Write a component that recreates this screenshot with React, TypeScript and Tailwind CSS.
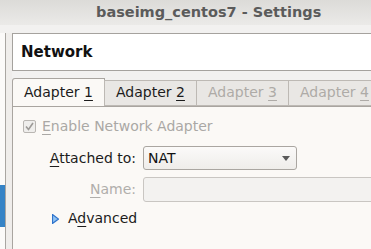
import React from "react";

// Mnemonic letter, underlined the way GTK draws access keys.
function Mn({ children }: { children: React.ReactNode }) {
  return <span className="underline decoration-1 underline-offset-[3px]">{children}</span>;
}

function Tab({ n, active, disabled }: { n: number; active?: boolean; disabled?: boolean }) {
  return (
    <div
      className={
        active
          ? "flex h-[28px] w-[93px] shrink-0 items-start justify-center rounded-tl-[3px] border border-b-0 border-[#a9a5a0] bg-[#fbf9f6] pt-[5px] text-[#1c1c1c]"
          : "mt-[2px] -ml-px flex h-[26px] w-[93px] shrink-0 items-start justify-center border border-[#bdb9b4] bg-[#e9e7e4] pt-[3px] " +
            (disabled ? "text-[#aeaba7]" : "text-[#1c1c1c]")
      }
    >
      <span>
        Adapter <Mn>{n}</Mn>
      </span>
    </div>
  );
}

export default function App() {
  return (
    <div
      className="h-[249px] w-[371px] overflow-hidden bg-[#f2f1f0] text-[14px] leading-[17px]"
      style={{ fontFamily: '"DejaVu Sans", "Noto Sans", sans-serif' }}
    >
      {/* Window title bar */}
      <div className="flex h-[25px] items-center bg-gradient-to-b from-[#dcdbd8] to-[#ebeae8] pl-[96px] text-[14.5px] font-bold text-[#5b5b5b]">
        baseimg_centos7 - Settings
      </div>

      <div className="flex pt-[8px]">
        {/* Category list (only its edge is visible) */}
        <div className="relative h-[216px] w-[6px] shrink-0 border-r border-[#a9a6a2] bg-[#fbfaf9]">
          <div className="absolute left-0 top-[152px] h-[42px] w-[5px] bg-[#3583c6]" />
        </div>
        <div className="w-[6px] shrink-0 bg-[#efedeb]" />

        <div className="flex min-w-0 flex-1 flex-col">
          {/* Page header */}
          <div className="flex h-[38px] w-[420px] items-center border border-[#a5a29e] bg-white pl-[8px] text-[15px] font-bold text-[#111]">
            Network
          </div>

          {/* Adapter tabs */}
          <div className="mt-[7px] flex">
            <Tab n={1} active />
            <Tab n={2} />
            <Tab n={3} disabled />
            <Tab n={4} disabled />
          </div>

          {/* Tab page */}
          <div className="h-[160px] w-[420px] border-l border-t border-[#a9a5a0] bg-[#fbf9f6] pl-[10px] pt-[11px]">
            <div className="flex items-center gap-[6px] text-[#aaa8a5]">
              <span className="flex h-[13px] w-[13px] items-center justify-center rounded-[2px] border border-[#b9b6b2] bg-[#efeeec]">
                <svg width="11" height="11" viewBox="0 0 11 11">
                  <polyline points="2,5.5 4.5,8.5 9,2" fill="none" stroke="#9c9a97" strokeWidth="1.6" />
                </svg>
              </span>
              <span>
                <Mn>E</Mn>nable Network Adapter
              </span>
            </div>

            <div className="mt-[11px] grid grid-cols-[114px_auto] items-center gap-x-[6px] gap-y-[7px]">
              <span className="pr-[1px] text-right text-[#1c1c1c]">
                <Mn>A</Mn>ttached to:
              </span>
              <div className="flex h-[24px] w-[154px] items-center justify-between rounded-[3px] border border-[#aaa6a1] bg-gradient-to-b from-[#fbfaf9] to-[#efedea] pl-[4px] pr-[6px] text-[#111]">
                <span>NAT</span>
                <svg width="8" height="5" viewBox="0 0 8 5">
                  <polygon points="0,0 8,0 4,5" fill="#5a5a5a" />
                </svg>
              </div>

              <span className="pr-[1px] text-right text-[#b0aeab]">
                <Mn>N</Mn>ame:
              </span>
              <div className="h-[25px] w-[260px] rounded-[3px] border border-[#c9c6c2] bg-[#f3f2f0]" />
            </div>

            <div className="mt-[8px] flex items-center gap-[9px] pl-[29px] text-[#1c1c1c]">
              <svg width="7" height="10" viewBox="0 0 7 10">
                <polygon points="0.5,0.5 6.5,5 0.5,9.5" fill="#8fc2f2" stroke="#2f74cc" strokeWidth="1.2" />
              </svg>
              <span>
                A<Mn>d</Mn>vanced
              </span>
            </div>
          </div>
        </div>
      </div>
    </div>
  );
}
